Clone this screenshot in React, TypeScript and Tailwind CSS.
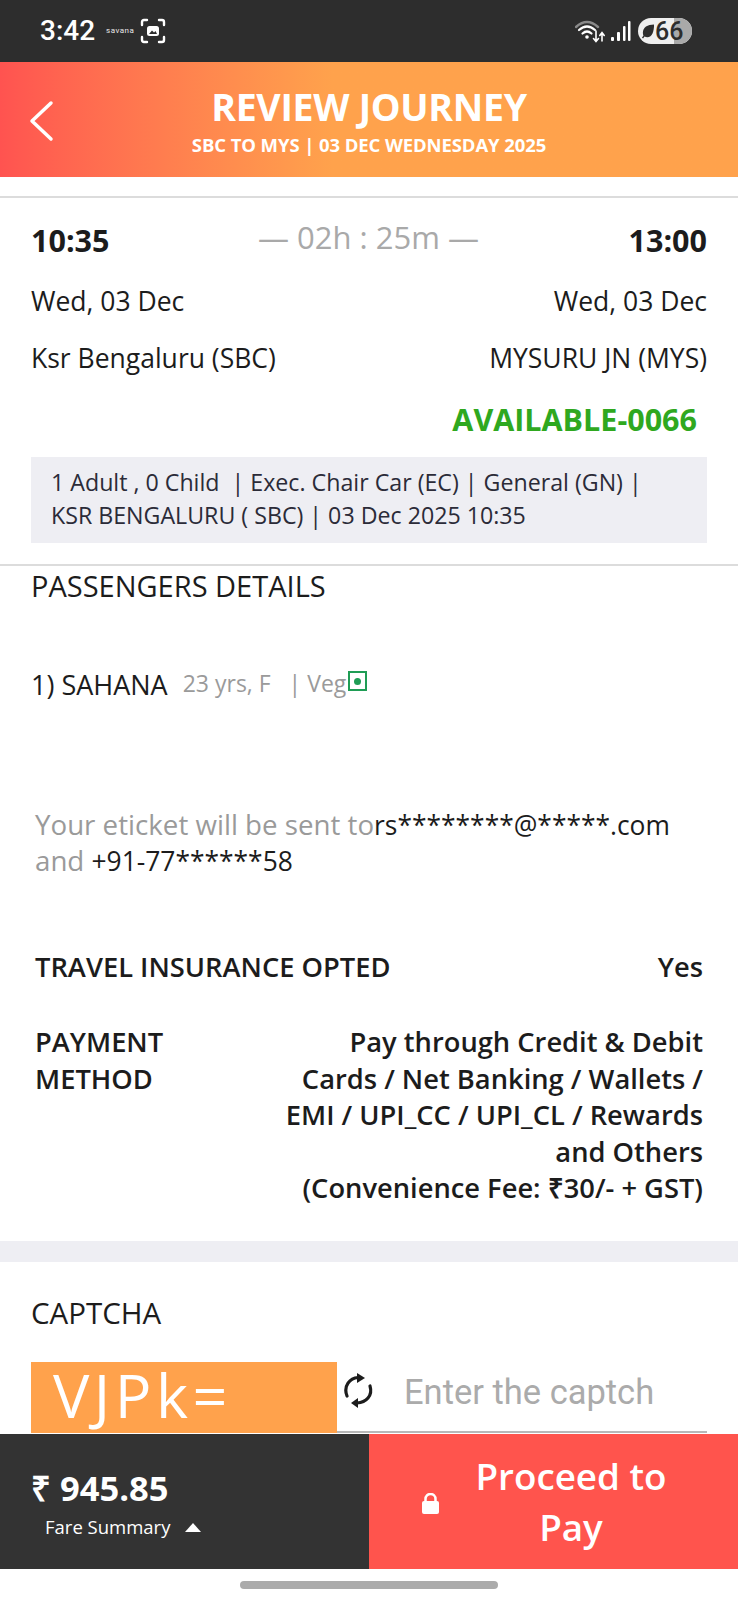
import React from 'react';

const font = "font-['Open_Sans',sans-serif]";

const StatusBar = () => (
  <div className="h-[62px] shrink-0 bg-[#2d2d2d] flex items-center pl-[40px] pr-[46px] font-['Roboto',sans-serif] text-white">
    <span className="text-[28px] font-medium w-[56px]">3:42</span>
    <span className="ml-[10px] text-[8px] tracking-[0.5px] text-[#e8e8e8]">savana</span>
    <svg className="ml-[6px]" width="26" height="26" viewBox="0 0 26 26" fill="none" stroke="white" strokeWidth="2.4" strokeLinecap="round">
      <path d="M2 7V4Q2 2 4 2H7M19 2H22Q24 2 24 4V7M24 19V22Q24 24 22 24H19M7 24H4Q2 24 2 22V19" />
      <rect x="7" y="8" width="12" height="10" rx="2.500" fill="white" stroke="none" />
      <path d="M9 16L12 12.500L14 14.500L15.500 13L17 16Z" fill="#2d2d2d" stroke="none" />
    </svg>
    <div className="ml-auto flex items-center">
      <svg width="32" height="26" viewBox="0 0 32 26" fill="none" strokeLinecap="round">
        <path d="M1 9Q12 -1 23 9" stroke="#8a8a8a" strokeWidth="2.4" />
        <path d="M4 12Q12 5 20 12M7.500 15.500Q12 11.500 16.500 15.500" stroke="white" strokeWidth="2.2" />
        <circle cx="12" cy="19" r="1.800" fill="white" />
        <path d="M21 13V23M18.500 20.500L21 23.500L23.500 20.500M27 23V15M24.800 17.500L27 14.500L29.200 17.500" stroke="white" strokeWidth="1.6" />
      </svg>
      <svg className="ml-[4px]" width="20" height="22" viewBox="0 0 20 22" fill="white">
        <rect x="0" y="17" width="3" height="4" rx="1" />
        <rect x="6" y="12" width="3" height="9" rx="1" />
        <rect x="12" y="6" width="2.5" height="15" rx="1" />
        <rect x="17" y="1" width="2.5" height="20" rx="1" />
      </svg>
      <div className="ml-[7px] relative w-[54px] h-[26px] rounded-full overflow-hidden bg-[#efefef] flex items-center text-[#2d2d2d]">
        <div className="absolute right-0 top-0 bottom-0 w-[18px] bg-[#a9a9a9]" />
        <svg className="relative ml-[3px]" width="14" height="16" viewBox="0 0 15 16" fill="#2d2d2d">
          <path d="M14 1C7 1 2 4 2 10c0 1 .2 2 .6 3L1 15l1.200 1 1.600-2c1 .6 2 .8 3 .8C12 14.800 14 8 14 1Z" />
        </svg>
        <span className="relative text-[25px] leading-none font-medium">66</span>
      </div>
    </div>
  </div>
);

const Header = () => (
  <div className={`h-[115px] shrink-0 relative flex flex-col items-center bg-gradient-to-r from-[#ff5350] from-0% to-[#ffa24c] to-45% text-white ${font}`}>
    <svg className="absolute left-[28px] top-[38px]" width="28" height="42" viewBox="0 0 28 42" fill="none" stroke="white" strokeWidth="3.500" strokeLinecap="round" strokeLinejoin="round">
      <path d="M23 3L4 21L23 39" />
    </svg>
    <h1 className="mt-[24px] text-[37.500px] leading-[42px] font-bold -tracking-[0.3px]">REVIEW JOURNEY</h1>
    <p className="mt-[5px] text-[18.5px] leading-[24px] font-bold -tracking-[0.1px]">SBC TO MYS | 03 DEC WEDNESDAY 2025</p>
  </div>
);

const Summary = () => (
  <section className="border-b-2 border-[#dcdcdc] pb-[21px]">
    <div className="px-[31px] pt-[22px] text-[#1c1c1c]">
      <div className="relative flex justify-between h-[42px] items-center">
        <b className="text-[30.500px] font-bold">10:35</b>
        <span className="text-[#a9a9a9] text-[31px] font-normal -mt-[8px] absolute left-[227px]">— 02h : 25m —</span>
        <b className="text-[30.500px] font-bold">13:00</b>
      </div>
      <div className="flex justify-between text-[26.500px] leading-[34px] mt-[22px]">
        <span>Wed, 03 Dec</span>
        <span>Wed, 03 Dec</span>
      </div>
      <div className="flex justify-between text-[26.500px] leading-[34px] mt-[23px]">
        <span>Ksr Bengaluru (SBC)</span>
        <span>MYSURU JN (MYS)</span>
      </div>
      <div className="text-right pr-[10px] mt-[25px] text-[#2fa81f] text-[30.500px] leading-[38px] font-bold">AVAILABLE-0066</div>
      <div className="mt-[19px] bg-[#eeeef3] pl-[20px] pr-[21px] pt-[9px] pb-[11px] text-[23.200px] leading-[33px] text-[#2b2b38]">
        <div className="whitespace-pre">1 Adult , 0 Child  | Exec. Chair Car (EC) | General (GN) |</div>
        <div>KSR BENGALURU ( SBC) | 03 Dec 2025 10:35</div>
      </div>
    </div>
  </section>
);

const Passengers = () => (
  <section className="px-[31px] text-[#1c1c1c]">
    <h2 className="text-[29px] leading-[36px] mt-[2px] font-medium">PASSENGERS DETAILS</h2>
    <div className="flex items-center mt-[61px] h-[40px]">
      <span className="text-[27px] font-medium">1) SAHANA</span>
      <span className="ml-[15px] text-[23px] text-[#9a9a9a] -mt-[4px] whitespace-pre">23 yrs, F   | Veg</span>
      <span className="-mt-[8px] ml-[2px] w-[19px] h-[20px] border-2 border-[#1f9d55] flex items-center justify-center">
        <span className="w-[7px] h-[7px] rounded-full bg-[#1f9d55]" />
      </span>
    </div>
  </section>
);

const Details = () => (
  <section className="px-[35px] text-[#1c1c1c]">
    <p className="mt-[101px] text-[27.700px] leading-[36px] text-[#9a9a9a]">
      Your eticket will be sent to<span className="text-[26.400px] leading-none text-[#1c1c1c]">rs********@*****.com</span>
      <br />
      and <span className="text-[26.400px] leading-none text-[#1c1c1c]">+91-77******58</span>
    </p>
    <div className="mt-[71px] flex justify-between text-[27.300px] leading-[36px] font-semibold">
      <span>TRAVEL INSURANCE OPTED</span>
      <span>Yes</span>
    </div>
    <div className="mt-[39px] flex justify-between text-[27.300px] leading-[36.500px] font-semibold">
      <span className="w-[150px]">PAYMENT METHOD</span>
      <span className="text-right w-[430px]">
        Pay through Credit &amp; Debit Cards / Net Banking / Wallets / EMI / UPI_CC / UPI_CL / Rewards and Others
        <br />
        (Convenience Fee: ₹30/- + GST)
      </span>
    </div>
  </section>
);

const Captcha = () => (
  <section className="mt-[34px] border-t-[21px] border-[#eeeef3] px-[31px]">
    <h2 className="mt-[33px] text-[29.500px] leading-[36px] text-[#1c1c1c] font-medium">CAPTCHA</h2>
    <div className="mt-[31px] flex h-[71px]">
      <div className="w-[306px] bg-[#ffa24c] text-white text-[61px] leading-[66px] pl-[22px] tracking-[4.500px]">VJPk=</div>
      <div className="flex-1 flex items-center border-b-2 border-[#b8b8b8] overflow-hidden">
        <svg className="ml-[6px] -mt-[11px] shrink-0 text-[#1c1c1c]" width="31" height="39" viewBox="0 0 31 39" fill="none" stroke="currentColor" strokeWidth="3.2" strokeLinecap="round">
          <path d="M4 25C0 15 7 7 15 6.500" />
          <path d="M27 15C30 25 23 31.500 14 32" />
          <path d="M14 2L22 7L14 12Z" fill="currentColor" stroke="none" />
          <path d="M15 27L8 32L15 37Z" fill="currentColor" stroke="none" />
        </svg>
        <span className="ml-[30px] w-[249px] overflow-hidden whitespace-nowrap text-[34.500px] text-[#ababab] font-['Roboto',sans-serif] -mt-[6px]">Enter the captcha</span>
      </div>
    </div>
  </section>
);

const BottomBar = () => (
  <div className="h-[135px] shrink-0 flex text-white">
    <div className="w-[369px] bg-[#333333] pl-[31px] pt-[32px]">
      <div className="text-[34.500px] leading-[44px] font-bold">₹ 945.85</div>
      <div className="ml-[14px] mt-[4px] flex items-center text-[18.500px] leading-[26px]">
        Fare Summary
        <span className="ml-[15px] w-0 h-0 border-x-[8px] border-x-transparent border-b-[9px] border-b-white" />
      </div>
    </div>
    <div className="flex-1 bg-[#ff544d] flex items-center">
      <svg className="ml-[53px] mt-[4px] shrink-0" width="17" height="21" viewBox="0 0 17 21" fill="white">
        <path d="M3.500 9V6a5 5 0 0 1 10 0v3" fill="none" stroke="white" strokeWidth="2.500" />
        <rect x="0" y="8" width="17" height="13" rx="2" />
      </svg>
      <div className="ml-[17px] w-[230px] text-center text-[36.800px] leading-[51px] font-semibold">Proceed to Pay</div>
    </div>
  </div>
);

export default function App() {
  return (
    <div className={`w-[738px] h-[1600px] flex flex-col bg-white overflow-hidden ${font}`}>
      <StatusBar />
      <Header />
      <div className="h-[19px] shrink-0" />
      <div className="flex-1 min-h-0 overflow-hidden border-t-2 border-[#dcdcdc]">
        <Summary />
        <Passengers />
        <Details />
        <Captcha />
      </div>
      <BottomBar />
      <div className="h-[31px] shrink-0 flex justify-center pt-[12px]">
        <div className="w-[258px] h-[8px] rounded-full bg-[#ababab]" />
      </div>
    </div>
  );
}
